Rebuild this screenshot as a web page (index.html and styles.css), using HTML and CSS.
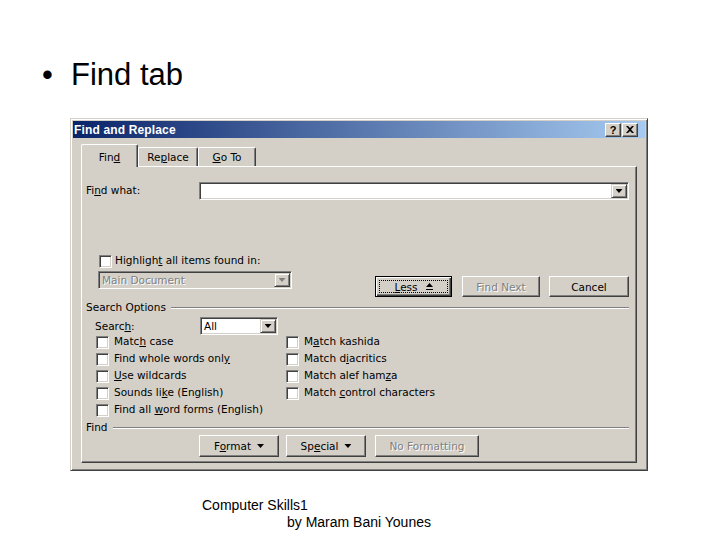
FILE: index.html
```html
<!DOCTYPE html>
<html lang="en">
<head>
	<meta charset="UTF-8">
	<title>Find tab</title>
	<link rel="stylesheet" href="styles.css">
</head>
<body>
	<div class="slide">
		<h1 class="heading"><span class="bullet">&bull;</span>Find tab</h1>

		<div class="dialog">
			<div class="titlebar">
				<span class="title">Find and Replace</span>
				<span class="cap-btn help">?</span>
				<span class="cap-btn close">
					<svg width="8" height="7" viewBox="0 0 8 7"><path d="M0 0h2l2 2 2-2h2L5 3.5 8 7H6L4 5 2 7H0l3-3.5z" fill="#000"/></svg>
				</span>
			</div>

			<div class="dialog-body">
				<div class="tabs">
					<span class="tab active">Fin<u>d</u></span>
					<span class="tab replace">Re<u>p</u>lace</span>
					<span class="tab goto"><u>G</u>o To</span>
				</div>

				<div class="panel">
					<div class="row find-row">
						<label class="field-label">Fi<u>n</u>d what:</label>
						<div class="combo wide"><span class="combo-text"></span><span class="drop"></span></div>
					</div>

					<div class="row check-row highlight-row">
						<span class="check"></span><span>Highligh<u>t</u> all items found in:</span>
					</div>

					<div class="row scope-row">
						<div class="combo scope disabled"><span class="combo-text">Main Document</span><span class="drop"></span></div>
						<div class="actions">
							<button type="button" class="btn default less"><span><u>L</u>ess</span>
								<svg width="7" height="8" viewBox="0 0 7 8"><path d="M3.5 0 7 4H0z M0 6h7v1H0z" fill="#000"/></svg>
							</button>
							<button type="button" class="btn disabled find-next">Find Next</button>
							<button type="button" class="btn cancel">Cancel</button>
						</div>
					</div>

					<div class="group-label">Search Options</div>

					<div class="row search-row">
						<label class="search-label">Searc<u>h</u>:</label>
						<div class="combo small"><span class="combo-text">All</span><span class="drop"></span></div>
					</div>

					<div class="options">
						<div class="option"><span class="check"></span><span>Matc<u>h</u> case</span></div>
						<div class="option"><span class="check"></span><span>Find whole words onl<u>y</u></span></div>
						<div class="option"><span class="check"></span><span><u>U</u>se wildcards</span></div>
						<div class="option"><span class="check"></span><span>Sounds li<u>k</u>e (English)</span></div>
						<div class="option"><span class="check"></span><span>Find all <u>w</u>ord forms (English)</span></div>
						<div class="option"><span class="check"></span><span>M<u>a</u>tch kashida</span></div>
						<div class="option"><span class="check"></span><span>Match d<u>i</u>acritics</span></div>
						<div class="option"><span class="check"></span><span>Match alef ham<u>z</u>a</span></div>
						<div class="option"><span class="check"></span><span>Match <u>c</u>ontrol characters</span></div>
					</div>

					<div class="group-label">Find</div>

					<div class="row bottom-buttons">
						<button type="button" class="btn format"><span>F<u>o</u>rmat</span><i class="arrow"></i></button>
						<button type="button" class="btn special"><span>Sp<u>e</u>cial</span><i class="arrow"></i></button>
						<button type="button" class="btn disabled no-format">No Formatting</button>
					</div>
				</div>
			</div>
		</div>

		<div class="footer">
			<div>Computer Skills1</div>
			<div class="byline">by Maram Bani Younes</div>
		</div>
	</div>
</body>
</html>
```

FILE: styles.css
```css
html {
	box-sizing: border-box;
}

*, *:before, *:after {
	box-sizing: inherit;
}

body {
	margin: 0;
	background: #fff;
	color: #000;
	font-family: "Liberation Sans", Arial, sans-serif;
}

.slide {
	width: 720px;
	height: 540px;
	overflow: hidden;
}

.heading {
	display: flex;
	margin: 0;
	height: 118px;
	padding: 57px 0 0 42px;
	font-size: 31px;
	font-weight: normal;
	line-height: 36px;
}

.bullet {
	width: 29px;
}

/* dialog window */
.dialog {
	margin-left: 70px;
	width: 578px;
	height: 353px;
	padding: 2px;
	background: #d4d0c8;
	border: 1px solid;
	border-color: #d4d0c8 #404040 #404040 #d4d0c8;
	box-shadow: inset 1px 1px #fff, inset -1px -1px #808080;
	font-family: "DejaVu Sans", Tahoma, sans-serif;
	font-size: 10.5px;
}

.titlebar {
	display: flex;
	align-items: center;
	height: 17px;
	padding: 0 7px 0 1px;
	background: linear-gradient(to right, #0a246a, #a6caf0);
}

.title {
	color: #fff;
	font-family: "Liberation Sans", Arial, sans-serif;
	font-size: 12px;
	font-weight: bold;
	letter-spacing: .15px;
}

.cap-btn {
	display: flex;
	align-items: center;
	justify-content: center;
	width: 16px;
	height: 14px;
	background: #d4d0c8;
	border: 1px solid;
	border-color: #fff #404040 #404040 #fff;
	box-shadow: inset -1px -1px #808080;
	font-family: "Liberation Sans", Arial, sans-serif;
	font-size: 11px;
	font-weight: bold;
}

.help {
	margin-left: auto;
	margin-right: 1px;
}

.dialog-body {
	padding: 6px 8px 5px 8px;
}

/* tabs */
.tabs {
	display: flex;
	align-items: flex-end;
	height: 22px;
}

.tab {
	display: block;
	height: 19px;
	padding-top: 3px;
	line-height: 13px;
	text-align: center;
	border-top: 1px solid #fff;
	border-left: 1px solid #fff;
	border-right: 1px solid #404040;
	box-shadow: inset -1px 0 #808080;
	border-radius: 2px 2px 0 0;
}

.tab.active {
	position: relative;
	z-index: 1;
	width: 57px;
	height: 23px;
	margin-bottom: -1px;
	padding-top: 6px;
	background: #d4d0c8;
}

.tab.replace {
	width: 60px;
}

.tab.goto {
	width: 58px;
}

.panel {
	height: 297px;
	padding: 0 7px 0 4px;
	border: 1px solid;
	border-color: #fff #404040 #404040 #fff;
	box-shadow: inset -1px -1px #808080;
}

.row {
	display: flex;
}

/* combo boxes */
.combo {
	display: flex;
	align-items: center;
	height: 18px;
	padding: 1px;
	background: #fff;
	border: 1px solid;
	border-color: #808080 #fff #fff #808080;
	box-shadow: inset 1px 1px #404040, inset -1px -1px #d4d0c8;
}

.combo-text {
	flex: 1;
	padding-left: 2px;
	line-height: 14px;
}

.drop {
	display: flex;
	align-items: center;
	justify-content: center;
	width: 16px;
	height: 14px;
	background: #d4d0c8;
	border: 1px solid;
	border-color: #d4d0c8 #404040 #404040 #d4d0c8;
	box-shadow: inset 1px 1px #fff, inset -1px -1px #808080;
}

.drop::after {
	content: "";
	width: 7px;
	height: 4px;
	background: #000;
	clip-path: polygon(0 0, 100% 0, 50% 100%);
}

.combo.disabled {
	background: #d4d0c8;
}

.combo.disabled .combo-text {
	color: #808080;
	text-shadow: 1px 1px #fff;
}

.combo.disabled .drop::after {
	background: #808080;
}

.find-row {
	align-items: flex-start;
	height: 18px;
	margin-top: 15px;
}

.field-label {
	width: 113px;
	padding-top: 2px;
	line-height: 13px;
}

.combo.wide {
	flex: 1;
}

/* checkboxes */
.check {
	flex: none;
	width: 13px;
	height: 13px;
	margin-top: 2px;
	background: #fff;
	border: 1px solid;
	border-color: #808080 #fff #fff #808080;
	box-shadow: inset 1px 1px #404040, inset -1px -1px #d4d0c8;
}

.check-row {
	align-items: flex-start;
	height: 15px;
	line-height: 15px;
}

.highlight-row {
	gap: 3px;
	margin: 53px 0 0 13px;
}

.scope-row {
	align-items: flex-start;
	margin-top: 3px;
}

.combo.scope {
	width: 194px;
	margin-left: 12px;
}

.actions {
	display: flex;
	margin: 5px 0 0 auto;
}

/* push buttons */
.btn {
	display: flex;
	align-items: center;
	justify-content: center;
	gap: 6px;
	height: 21px;
	padding: 0;
	background: #d4d0c8;
	color: #000;
	font: inherit;
	border: 1px solid;
	border-color: #fff #404040 #404040 #fff;
	box-shadow: inset -1px -1px #808080;
}

.btn.default {
	border-color: #000;
	box-shadow: inset 1px 1px #fff, inset -1px -1px #404040, inset -2px -2px #808080;
	outline: 1px dotted #000;
	outline-offset: -5px;
}

.btn.disabled {
	color: #808080;
	text-shadow: 1px 1px #fff;
}

.less {
	width: 77px;
	gap: 8px;
}

.find-next {
	width: 78px;
	margin-left: 10px;
}

.cancel {
	width: 80px;
	margin-left: 9px;
}

/* etched group headers */
.group-label {
	display: flex;
	align-items: center;
	margin-top: 4px;
	line-height: 13px;
}

.group-label::after {
	content: "";
	flex: 1;
	height: 2px;
	margin-left: 5px;
	border-top: 1px solid #808080;
	border-bottom: 1px solid #fff;
}

.search-row {
	align-items: center;
	height: 18px;
	margin-top: 3px;
}

.search-label {
	width: 105px;
	margin-left: 9px;
	line-height: 13px;
}

.combo.small {
	width: 78px;
}

.options {
	display: grid;
	grid-template-columns: 190px auto;
	grid-template-rows: repeat(5, 17px);
	grid-auto-flow: column;
	margin: -1px 0 0 10px;
}

.option {
	display: flex;
	align-items: flex-start;
	gap: 5px;
	line-height: 15px;
}

.options + .group-label {
	margin-top: 2px;
}

.bottom-buttons {
	margin-top: 1px;
	padding-left: 113px;
}

.bottom-buttons .btn {
	height: 22px;
}

.arrow {
	width: 7px;
	height: 4px;
	background: #000;
	clip-path: polygon(0 0, 100% 0, 50% 100%);
}

.format {
	width: 80px;
}

.special {
	width: 80px;
	margin-left: 7px;
}

.no-format {
	width: 104px;
	margin-left: 9px;
}

/* slide footer */
.footer {
	margin: 26px 0 0 202px;
	font-size: 14px;
	line-height: 17px;
}

.byline {
	padding-left: 85px;
}
```
